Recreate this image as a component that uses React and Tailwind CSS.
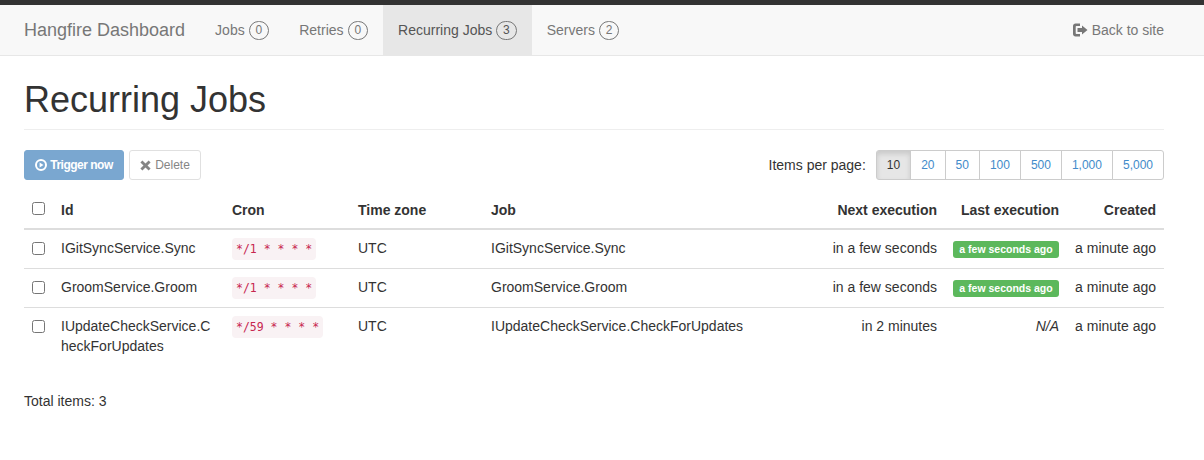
const navItems = [
  { label: "Jobs", count: 0 },
  { label: "Retries", count: 0 },
  { label: "Recurring Jobs", count: 3, active: true },
  { label: "Servers", count: 2 },
];

const pageSizes = ["10", "20", "50", "100", "500", "1,000", "5,000"];

const jobs = [
  {
    id: "IGitSyncService.Sync",
    cron: "*/1 * * * *",
    job: "IGitSyncService.Sync",
    next: "in a few seconds",
    last: "a few seconds ago",
  },
  {
    id: "GroomService.Groom",
    cron: "*/1 * * * *",
    job: "GroomService.Groom",
    next: "in a few seconds",
    last: "a few seconds ago",
  },
  {
    id: "IUpdateCheckService.CheckForUpdates",
    cron: "*/59 * * * *",
    job: "IUpdateCheckService.CheckForUpdates",
    next: "in 2 minutes",
    last: null,
  },
];

function LogOutIcon() {
  return (
    <svg width="15" height="14" viewBox="0 0 15 14" className="mr-[4px] shrink-0" fill="currentColor">
      <path d="M2.500 0.500H7v2.500H3.500C3 3 2.700 3.300 2.700 3.800v6.400c0 .5.300.8.800.8H7v2.500H2.500C1.100 13.500 0 12.400 0 11V3C0 1.600 1.100 0.500 2.500 0.500z" />
      <path d="M9 2.500 14.500 7 9 11.500V9H4.500V5H9z" />
    </svg>
  );
}

function PlayCircleIcon() {
  return (
    <svg width="12" height="12" viewBox="0 0 12 12" className="mr-[3px] shrink-0" fill="none">
      <circle cx="6" cy="6" r="5" stroke="currentColor" strokeWidth="2" />
      <path d="M4.600 3.400 8.500 6l-3.900 2.600z" fill="currentColor" />
    </svg>
  );
}

function RemoveIcon() {
  return (
    <svg width="11" height="11" viewBox="0 0 11 11" className="mr-[4px] shrink-0" fill="currentColor">
      <path d="M2.400 0.400 5.500 3.500 8.600 0.400 10.600 2.400 7.500 5.500 10.600 8.600 8.600 10.600 5.500 7.500 2.400 10.600 0.400 8.600 3.500 5.500 0.400 2.400z" />
    </svg>
  );
}

function Navbar() {
  return (
    <nav className="h-[51px] flex items-stretch justify-between bg-[#f8f8f8] border-b border-[#e7e7e7] pl-[24px] pr-[40px]">
      <div className="flex items-stretch">
        <a className="flex items-center pr-[15px] text-[18px] text-[#777]">Hangfire Dashboard</a>
        {navItems.map((item) => (
          <a
            key={item.label}
            className={`flex items-center px-[15px] ${item.active ? "bg-[#e7e7e7] text-[#555]" : "text-[#777]"}`}
          >
            {item.label}
            <span className="ml-[4px] h-[19px] w-[20.5px] flex items-center justify-center rounded-full border border-[#777] text-[12px]">
              {item.count}
            </span>
          </a>
        ))}
      </div>
      <a className="flex items-center text-[#777]">
        <LogOutIcon />
        Back to site
      </a>
    </nav>
  );
}

function Toolbar() {
  return (
    <div className="flex items-center justify-between mt-[20px] text-[12px]">
      <div className="flex gap-[5px]">
        <button className="h-[30px] w-[100px] flex items-center justify-center rounded-[3px] border border-[#7aa7cf] bg-[#7aa7d0] text-white font-bold tracking-[-0.5px]">
          <PlayCircleIcon />
          Trigger now
        </button>
        <button className="h-[30px] w-[72px] flex items-center justify-center rounded-[3px] border border-[#e0e0e0] bg-white text-[#858585]">
          <RemoveIcon />
          Delete
        </button>
      </div>
      <div className="flex items-center">
        <span className="text-[14px] mr-[10px]">Items per page:</span>
        <div className="flex">
          {pageSizes.map((size, index) => (
            <span
              key={size}
              className={`h-[30px] flex items-center px-[10px] border border-[#ccc] ${index > 0 ? "-ml-px" : "rounded-l-[3px]"} ${
                index === pageSizes.length - 1 ? "rounded-r-[3px]" : ""
              } ${size === "10" ? "bg-[#e6e6e6] border-[#adadad] text-[#333] shadow-[inset_0_3px_5px_rgba(0,0,0,0.125)]" : "bg-white text-[#428bca]"}`}
            >
              {size}
            </span>
          ))}
        </div>
      </div>
    </div>
  );
}

function JobsTable() {
  const th = "pt-[10px] pb-[8px] px-[8px] border-b-2 border-[#ddd]";
  return (
    <table className="w-full table-fixed border-separate border-spacing-0 mt-[10px]">
      <colgroup>
        <col className="w-[29px]" />
        <col className="w-[171px]" />
        <col className="w-[126px]" />
        <col className="w-[133px]" />
        <col className="w-[320px]" />
        <col className="w-[142px]" />
        <col className="w-[122px]" />
        <col className="w-[97px]" />
      </colgroup>
      <thead>
        <tr className="font-bold">
          <th className="pt-[12px] px-[8px] align-top border-b-2 border-[#ddd]">
            <input type="checkbox" className="block" />
          </th>
          <th className={`${th} text-left`}>Id</th>
          <th className={`${th} text-left`}>Cron</th>
          <th className={`${th} text-left`}>Time zone</th>
          <th className={`${th} text-left`}>Job</th>
          <th className={`${th} text-right`}>Next execution</th>
          <th className={`${th} text-right`}>Last execution</th>
          <th className={`${th} text-right`}>Created</th>
        </tr>
      </thead>
      <tbody>
        {jobs.map((row, index) => {
          const td = `p-[8px] align-top ${index < jobs.length - 1 ? "border-b border-[#ddd]" : ""}`;
          return (
            <tr key={row.id}>
              <td className={td}>
                <input type="checkbox" className="block mt-[4px]" />
              </td>
              <td className={`${td} break-all`}>{row.id}</td>
              <td className={td}>
                <code className="block w-fit h-[22px] px-[4px] rounded-[4px] bg-[#f9f2f4] text-[#c7254e] text-[11.5px] leading-[22px] whitespace-pre font-['DejaVu_Sans_Mono',monospace]">
                  {row.cron}
                </code>
              </td>
              <td className={td}>UTC</td>
              <td className={td}>{row.job}</td>
              <td className={`${td} text-right`}>{row.next}</td>
              <td className={`${td} text-right`}>
                {row.last ? (
                  <span className="inline-block h-[17px] w-[106px] text-center rounded-[3px] bg-[#5cb85c] text-white text-[10.5px] font-bold leading-[17px] align-top mt-[3px] whitespace-nowrap">
                    {row.last}
                  </span>
                ) : (
                  <em>N/A</em>
                )}
              </td>
              <td className={`${td} text-right`}>a minute ago</td>
            </tr>
          );
        })}
      </tbody>
    </table>
  );
}

export default function App() {
  return (
    <div className="min-h-[460px] bg-white text-[#333] text-[14px] leading-[20px] font-['Liberation_Sans',Arial,sans-serif]">
      <div className="h-[5px] bg-[#333]" />
      <Navbar />
      <main className="px-[24px] w-[1188px]">
        <div className="pt-[24px] pb-[9px] border-b border-[#eee]">
          <h1 className="text-[36px] leading-[40px] font-medium">Recurring Jobs</h1>
        </div>
        <Toolbar />
        <JobsTable />
        <p className="mt-[27px]">Total items: 3</p>
      </main>
    </div>
  );
}
